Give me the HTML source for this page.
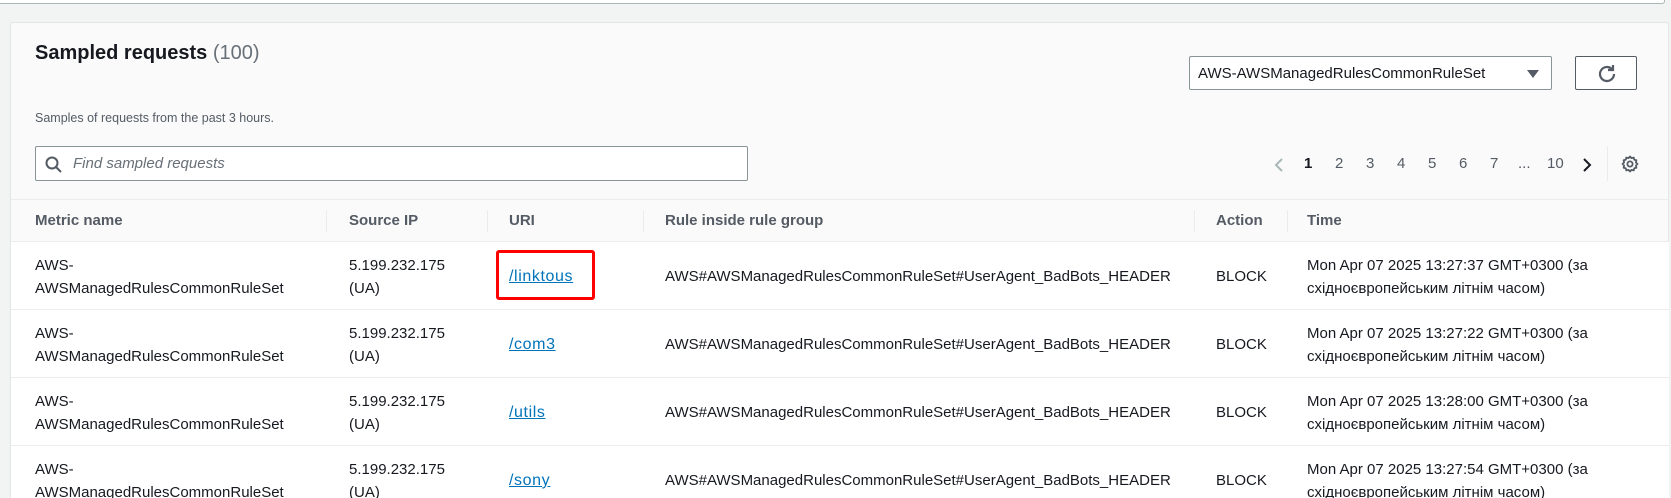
<!DOCTYPE html>
<html><head><meta charset="utf-8"><style>
*{box-sizing:border-box;margin:0;padding:0}
html,body{width:1671px;height:498px;overflow:hidden}
body{background:#f2f3f3;font-family:"Liberation Sans",sans-serif;color:#16191f;position:relative}
.top{position:absolute;left:-2px;top:-10px;width:1667px;height:14px;border:1px solid #aab7b8;border-radius:0 0 3px 3px;background:#fff}
.card{position:absolute;left:10px;top:22px;width:1659px;height:476px;background:#fafafa;border:1px solid #e3e6e6;border-bottom:none;border-radius:3px 3px 0 0}
.abs{position:absolute;white-space:nowrap}
.title{left:35px;top:42px;font-size:20px;font-weight:bold}
.title span{font-weight:normal;color:#687078}
.sub{left:35px;top:111px;font-size:12.5px;color:#545b64}
.search{left:35px;top:146px;width:713px;height:35px;border:1px solid #879596;border-radius:2px;background:#fff}
.search i{position:absolute;left:37px;top:8px;font-size:15px;color:#687078;font-style:italic}
.sel{left:1189px;top:56px;width:363px;height:34px;border:1px solid #879596;border-radius:2px;background:#fff;font-size:15px;padding:8px 8px}
.sel b{position:absolute;right:12px;top:13px;width:0;height:0;border-left:6px solid transparent;border-right:6px solid transparent;border-top:8px solid #545b64}
.btn{left:1575px;top:56px;width:62px;height:34px;border:1px solid #545b64;border-radius:2px;background:#fff}
.pg{top:155px;font-size:15px;color:#545b64}
.hdr{left:11px;top:199px;width:1658px;height:43px;border-top:1px solid #eaeded;border-bottom:1px solid #eaeded}
.th{top:212px;font-size:15px;font-weight:bold;color:#545b64}
.sep{width:1px;height:22px;background:#eaeded;top:210px}
.row{left:11px;width:1658px;height:68px;background:#fff;border-bottom:1px solid #eaeded}
.td{font-size:15px;line-height:23px}
a{color:#0073bb;text-decoration:underline;font-size:16px;letter-spacing:0.6px}
.red{left:496px;top:250px;width:99px;height:50px;border:3px solid #ff0000;border-radius:3px}
</style></head><body>
<div class="top"></div>
<div class="card"></div>
<div class="abs title">Sampled requests <span>(100)</span></div>
<div class="abs sub">Samples of requests from the past 3 hours.</div>
<div class="abs search"><svg style="position:absolute;left:9px;top:9px" width="17" height="17" viewBox="0 0 17 17"><circle cx="7" cy="7" r="5.5" fill="none" stroke="#545b64" stroke-width="2"/><path d="M11 11l5 5" stroke="#545b64" stroke-width="2"/></svg><i>Find sampled requests</i></div>
<div class="abs sel">AWS-AWSManagedRulesCommonRuleSet<b></b></div>
<div class="abs btn"><svg style="position:absolute;left:19px;top:5px" width="24" height="24" viewBox="0 0 24 24"><path d="M19 12a7 7 0 1 1-2.2-5.1" fill="none" stroke="#545b64" stroke-width="2.2"/><path d="M18 3v5h-5" fill="none" stroke="#545b64" stroke-width="2.2"/></svg></div>
<svg class="abs" style="left:1273px;top:157px" width="12" height="16" viewBox="0 0 12 16"><path d="M9 2L3 8l6 6" fill="none" stroke="#aab7b8" stroke-width="2"/></svg>
<div class="abs pg" style="left:1304px;color:#16191f;font-weight:bold">1</div>
<div class="abs pg" style="left:1335px">2</div>
<div class="abs pg" style="left:1366px">3</div>
<div class="abs pg" style="left:1397px">4</div>
<div class="abs pg" style="left:1428px">5</div>
<div class="abs pg" style="left:1459px">6</div>
<div class="abs pg" style="left:1490px">7</div>
<div class="abs pg" style="left:1518px">...</div>
<div class="abs pg" style="left:1547px">10</div>
<svg class="abs" style="left:1581px;top:157px" width="12" height="16" viewBox="0 0 12 16"><path d="M3 2l6 6-6 6" fill="none" stroke="#16191f" stroke-width="2"/></svg>
<div class="abs" style="left:1607px;top:146px;width:1px;height:35px;background:#eaeded"></div>
<svg class="abs" style="left:1621px;top:155px" width="18" height="18" viewBox="0 0 18 18"><path d="M9 1.5l1.5 1.6 2.2-.5.6 2.1 2.1.6-.5 2.2L16.5 9l-1.6 1.5.5 2.2-2.1.6-.6 2.1-2.2-.5L9 16.5l-1.5-1.6-2.2.5-.6-2.1-2.1-.6.5-2.2L1.5 9l1.6-1.5-.5-2.2 2.1-.6.6-2.1 2.2.5z" fill="none" stroke="#545b64" stroke-width="1.8" stroke-linejoin="round"/><circle cx="9" cy="9" r="2.6" fill="none" stroke="#545b64" stroke-width="1.8"/></svg>
<div class="abs hdr"></div>
<div class="abs th" style="left:35px">Metric name</div>
<div class="abs sep" style="left:326px"></div>
<div class="abs th" style="left:349px">Source IP</div>
<div class="abs sep" style="left:487px"></div>
<div class="abs th" style="left:509px">URI</div>
<div class="abs sep" style="left:643px"></div>
<div class="abs th" style="left:665px">Rule inside rule group</div>
<div class="abs sep" style="left:1194px"></div>
<div class="abs th" style="left:1216px">Action</div>
<div class="abs sep" style="left:1287px"></div>
<div class="abs th" style="left:1307px">Time</div>

<div class="abs row" style="top:242px"></div>
<div class="abs row" style="top:310px"></div>
<div class="abs row" style="top:378px"></div>
<div class="abs row" style="top:446px;height:52px;border-bottom:none"></div>

<div class="abs td" style="left:35px;top:254px">AWS-<br>AWSManagedRulesCommonRuleSet</div>
<div class="abs td" style="left:349px;top:254px">5.199.232.175<br>(UA)</div>
<div class="abs td" style="left:509px;top:265px"><a>/linktous</a></div>
<div class="abs td" style="left:665px;top:265px">AWS#AWSManagedRulesCommonRuleSet#UserAgent_BadBots_HEADER</div>
<div class="abs td" style="left:1216px;top:265px">BLOCK</div>
<div class="abs td" style="left:1307px;top:254px">Mon Apr 07 2025 13:27:37 GMT+0300 (за<br>східноєвропейським літнім часом)</div>

<div class="abs td" style="left:35px;top:322px">AWS-<br>AWSManagedRulesCommonRuleSet</div>
<div class="abs td" style="left:349px;top:322px">5.199.232.175<br>(UA)</div>
<div class="abs td" style="left:509px;top:333px"><a>/com3</a></div>
<div class="abs td" style="left:665px;top:333px">AWS#AWSManagedRulesCommonRuleSet#UserAgent_BadBots_HEADER</div>
<div class="abs td" style="left:1216px;top:333px">BLOCK</div>
<div class="abs td" style="left:1307px;top:322px">Mon Apr 07 2025 13:27:22 GMT+0300 (за<br>східноєвропейським літнім часом)</div>

<div class="abs td" style="left:35px;top:390px">AWS-<br>AWSManagedRulesCommonRuleSet</div>
<div class="abs td" style="left:349px;top:390px">5.199.232.175<br>(UA)</div>
<div class="abs td" style="left:509px;top:401px"><a>/utils</a></div>
<div class="abs td" style="left:665px;top:401px">AWS#AWSManagedRulesCommonRuleSet#UserAgent_BadBots_HEADER</div>
<div class="abs td" style="left:1216px;top:401px">BLOCK</div>
<div class="abs td" style="left:1307px;top:390px">Mon Apr 07 2025 13:28:00 GMT+0300 (за<br>східноєвропейським літнім часом)</div>

<div class="abs td" style="left:35px;top:458px">AWS-<br>AWSManagedRulesCommonRuleSet</div>
<div class="abs td" style="left:349px;top:458px">5.199.232.175<br>(UA)</div>
<div class="abs td" style="left:509px;top:469px"><a>/sony</a></div>
<div class="abs td" style="left:665px;top:469px">AWS#AWSManagedRulesCommonRuleSet#UserAgent_BadBots_HEADER</div>
<div class="abs td" style="left:1216px;top:469px">BLOCK</div>
<div class="abs td" style="left:1307px;top:458px">Mon Apr 07 2025 13:27:54 GMT+0300 (за<br>східноєвропейським літнім часом)</div>

<div class="abs red"></div>
</body></html>
